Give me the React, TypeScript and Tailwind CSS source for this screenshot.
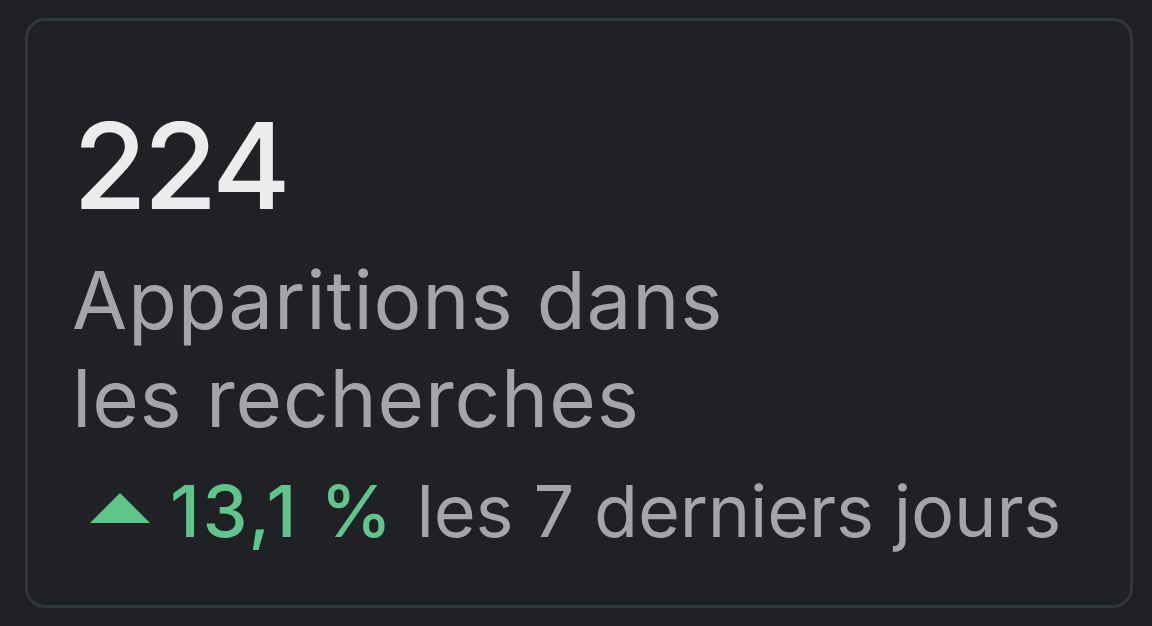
import React from "react";

export default function App() {
  return (
    <div className="w-[1152px] h-[626px] bg-[#1e2024] pt-[18px] pl-[25px] pr-[19px] pb-[18px]" style={{ fontFamily: "Inter, 'Noto Sans', sans-serif" }}>
      <div className="h-[590px] rounded-[20px] border-[3px] border-[#33363b] bg-[#1f2125] pl-[44px] pt-[75px]">
        <div className="ml-[1px] text-[120px] leading-[140px] font-medium text-[#ececec] tracking-[-3.5px]">224</div>
        <div className="mt-[15px] text-[80px] leading-[98px] text-[#a4a5a8] tracking-[0.8px]">
          Apparitions dans
          <br />
          les recherches
        </div>
        <div className="mt-[24px] flex items-center text-[72px] leading-[80px]">
          <svg width="60" height="31" viewBox="0 0 60 31" className="ml-[18px] mr-[20px] mt-[-6px]">
            <polygon points="30,0 60,30 0,30" fill="#5fc58a" />
          </svg>
          <span className="text-[#5fc58a] font-medium tracking-[2.5px]">13,1 %</span>
          <span className="ml-[22px] text-[#a4a5a8] tracking-[-0.2px]">les 7 derniers jours</span>
        </div>
      </div>
    </div>
  );
}
